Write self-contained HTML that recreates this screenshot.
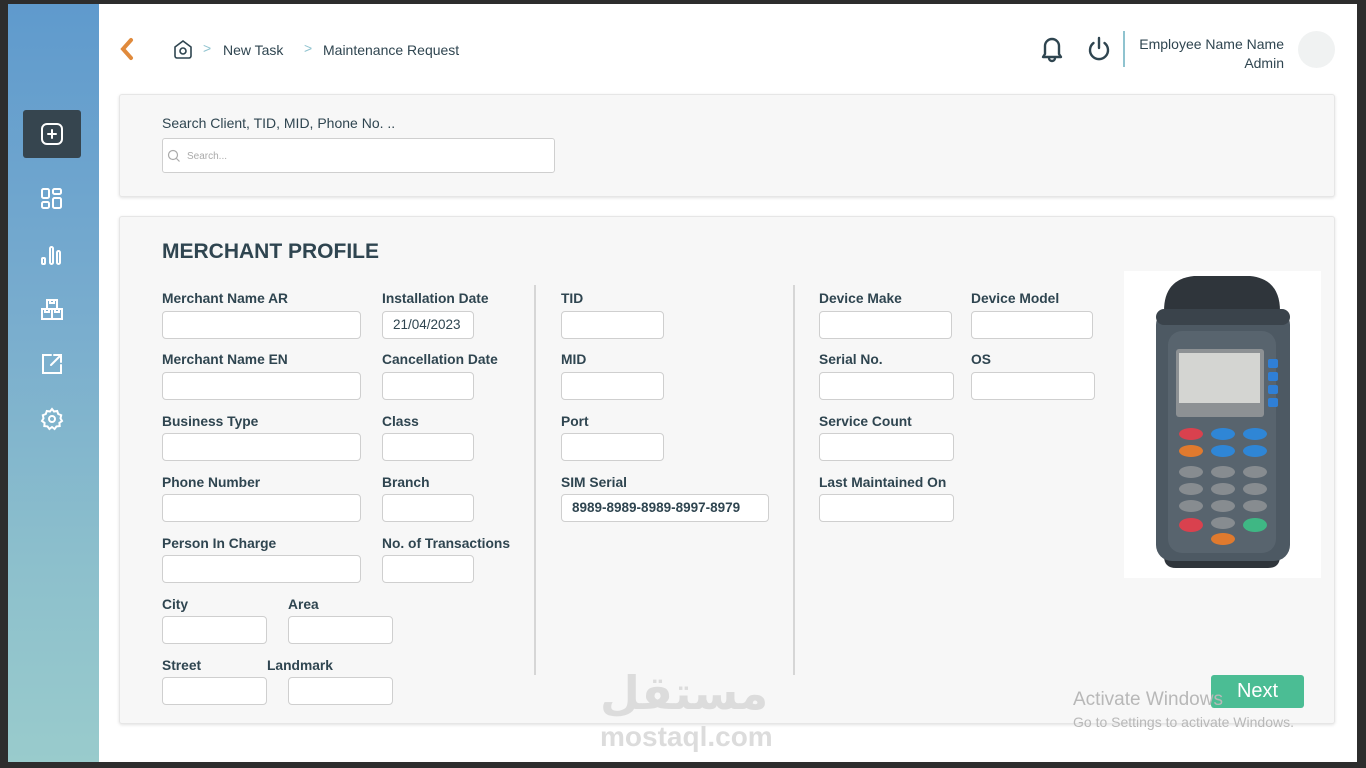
<!DOCTYPE html>
<html><head><meta charset="utf-8"><style>
*{margin:0;padding:0;box-sizing:border-box}
body{width:1366px;height:768px;background:#2d2d2d;position:relative;overflow:hidden;font-family:"Liberation Sans",sans-serif;color:#2f4550}
.abs{position:absolute}
#main{left:8px;top:4px;width:1349px;height:758px;background:#fff}
#side{left:8px;top:4px;width:91px;height:758px;background:linear-gradient(180deg,#5f9acd 0%,#78acce 40%,#8dc0cc 75%,#99cbcc 100%)}
.card{background:#f7f7f7;border:1px solid #e6e6e6;border-radius:3px;box-shadow:0 1px 3px rgba(0,0,0,.12)}
.lbl{position:absolute;font-size:13.8px;font-weight:bold;color:#2f4550;white-space:nowrap}
.inp{position:absolute;height:28px;background:#fff;border:1px solid #cfcfcf;border-radius:4px;font-size:13.5px;padding-left:10px;line-height:26px;color:#2f4550}
.ic{position:absolute}
</style></head><body>
<div id="main" class="abs"></div>
<div id="side" class="abs"></div>
<div class="abs" style="left:23px;top:110px;width:58px;height:48px;background:#36454f;border-radius:3px"></div>
<svg class="ic" style="left:40px;top:122px" width="24" height="24" viewBox="0 0 24 24" fill="none" stroke="#fff" stroke-width="2" stroke-linecap="round"><rect x="2" y="2" width="20" height="20" rx="5"/><path d="M12 8v8M8 12h8"/></svg>
<svg class="ic" style="left:40px;top:187px" width="24" height="24" viewBox="0 0 24 24" fill="none" stroke="#fff" stroke-width="2"><rect x="2" y="2" width="7" height="9" rx="1.5"/><rect x="13" y="2" width="8" height="5" rx="1.5"/><rect x="2" y="15" width="7" height="6" rx="1.5"/><rect x="13" y="11" width="8" height="10" rx="1.5"/></svg>
<svg class="ic" style="left:40px;top:243px" width="24" height="24" viewBox="0 0 24 24" fill="none" stroke="#fff" stroke-width="2"><rect x="2" y="15" width="3" height="6" rx="1"/><rect x="10" y="4" width="3" height="17" rx="1.5"/><rect x="17" y="8" width="3" height="13" rx="1.5"/></svg>
<svg class="ic" style="left:40px;top:298px" width="24" height="24" viewBox="0 0 24 24" fill="none" stroke="#fff" stroke-width="2"><rect x="7" y="2" width="10" height="9"/><rect x="2" y="11" width="10" height="10"/><rect x="12" y="11" width="10" height="10"/><path d="M10 2v3h4V2M5 11v3h4v-3M15 11v3h4v-3"/></svg>
<svg class="ic" style="left:40px;top:352px" width="24" height="24" viewBox="0 0 24 24" fill="none" stroke="#fff" stroke-width="2" stroke-linecap="round"><path d="M11 3H3v18h18v-8M14 3h7v7M21 3l-10 10"/></svg>
<svg class="ic" style="left:40px;top:407px" width="24" height="24" viewBox="0 0 24 24" fill="none" stroke="#fff" stroke-width="2"><path d="M12 2l2 2.5 3.2-.5 1 3 3 1.2-.7 3.1L22 14l-2.6 1.9.3 3.2-3.2.3L14.6 22 12 20l-2.6 2-1.9-2.6-3.2-.3.3-3.2L2 14l1.5-2.7-.7-3.1 3-1.2 1-3 3.2.5z"/><circle cx="12" cy="12" r="3"/></svg>

<svg class="ic" style="left:118px;top:37px" width="18" height="24" viewBox="0 0 18 24" fill="none" stroke="#e08a3c" stroke-width="4" stroke-linecap="round"><path d="M13 3L5 12l8 9"/></svg>
<svg class="ic" style="left:172px;top:38px" width="22" height="22" viewBox="0 0 22 22" fill="none" stroke="#2f4550" stroke-width="1.6"><path d="M3 9L11 3l8 6v9a2 2 0 0 1-2 2H5a2 2 0 0 1-2-2z"/><circle cx="11" cy="13" r="3"/></svg>
<div class="abs" style="left:203px;top:40px;font-size:14px;color:#8fc3cf">&gt;</div>
<div class="abs" style="left:223px;top:42px;font-size:14px">New Task</div>
<div class="abs" style="left:304px;top:40px;font-size:14px;color:#8fc3cf">&gt;</div>
<div class="abs" style="left:323px;top:42px;font-size:14px">Maintenance Request</div>

<svg class="ic" style="left:1040px;top:36px" width="24" height="28" viewBox="0 0 24 28" fill="none" stroke="#2f4550" stroke-width="2.4" stroke-linejoin="round"><path d="M12 3a7 7 0 0 0-7 7v8l-2 3h18l-2-3v-8a7 7 0 0 0-7-7z"/><path d="M9 22a3 3 0 0 0 6 0"/></svg>
<svg class="ic" style="left:1087px;top:36px" width="24" height="26" viewBox="0 0 24 26" fill="none" stroke="#2f4550" stroke-width="2.4" stroke-linecap="round"><path d="M12 2v10M6.5 7a9 9 0 1 0 11 0"/></svg>
<div class="abs" style="left:1123px;top:31px;width:2px;height:36px;background:#8fc3cf"></div>
<div class="abs" style="left:1100px;top:36px;width:184px;text-align:right;font-size:14px">Employee Name Name</div>
<div class="abs" style="left:1100px;top:55px;width:184px;text-align:right;font-size:14px">Admin</div>
<div class="abs" style="left:1298px;top:31px;width:37px;height:37px;border-radius:50%;background:#f0f2f2"></div>

<div class="abs card" style="left:119px;top:94px;width:1216px;height:103px"></div>
<div class="abs" style="left:162px;top:115px;font-size:14px">Search Client, TID, MID, Phone No. ..</div>
<div class="abs" style="left:162px;top:138px;width:393px;height:35px;background:#fff;border:1px solid #cfcfcf;border-radius:3px"></div>
<svg class="ic" style="left:167px;top:149px" width="14" height="14" viewBox="0 0 14 14" fill="none" stroke="#aaa" stroke-width="1.2"><circle cx="6" cy="6" r="4.5"/><path d="M9.5 9.5l3 3"/></svg>
<div class="abs" style="left:187px;top:151px;font-size:10px;color:#aaa">Search...</div>

<div class="abs card" style="left:119px;top:216px;width:1216px;height:508px"></div>
<div class="abs" style="left:162px;top:240px;font-size:21px;font-weight:bold">MERCHANT PROFILE</div>

<div class="lbl" style="left:162px;top:291px">Merchant Name AR</div><div class="inp" style="left:162px;top:311px;width:199px"></div>
<div class="lbl" style="left:382px;top:291px">Installation Date</div><div class="inp" style="left:382px;top:311px;width:92px">21/04/2023</div>
<div class="lbl" style="left:162px;top:352px">Merchant Name EN</div><div class="inp" style="left:162px;top:372px;width:199px"></div>
<div class="lbl" style="left:382px;top:352px">Cancellation Date</div><div class="inp" style="left:382px;top:372px;width:92px"></div>
<div class="lbl" style="left:162px;top:414px">Business Type</div><div class="inp" style="left:162px;top:433px;width:199px"></div>
<div class="lbl" style="left:382px;top:414px">Class</div><div class="inp" style="left:382px;top:433px;width:92px"></div>
<div class="lbl" style="left:162px;top:475px">Phone Number</div><div class="inp" style="left:162px;top:494px;width:199px"></div>
<div class="lbl" style="left:382px;top:475px">Branch</div><div class="inp" style="left:382px;top:494px;width:92px"></div>
<div class="lbl" style="left:162px;top:536px">Person In Charge</div><div class="inp" style="left:162px;top:555px;width:199px"></div>
<div class="lbl" style="left:382px;top:536px">No. of Transactions</div><div class="inp" style="left:382px;top:555px;width:92px"></div>
<div class="lbl" style="left:162px;top:597px">City</div><div class="inp" style="left:162px;top:616px;width:105px"></div>
<div class="lbl" style="left:288px;top:597px">Area</div><div class="inp" style="left:288px;top:616px;width:105px"></div>
<div class="lbl" style="left:162px;top:658px">Street</div><div class="inp" style="left:162px;top:677px;width:105px"></div>
<div class="lbl" style="left:267px;top:658px">Landmark</div><div class="inp" style="left:288px;top:677px;width:105px"></div>

<div class="abs" style="left:534px;top:285px;width:2px;height:390px;background:#d6d6d6"></div>
<div class="lbl" style="left:561px;top:291px">TID</div><div class="inp" style="left:561px;top:311px;width:103px"></div>
<div class="lbl" style="left:561px;top:352px">MID</div><div class="inp" style="left:561px;top:372px;width:103px"></div>
<div class="lbl" style="left:561px;top:414px">Port</div><div class="inp" style="left:561px;top:433px;width:103px"></div>
<div class="lbl" style="left:561px;top:475px">SIM Serial</div><div class="inp" style="left:561px;top:494px;width:208px;font-weight:bold">8989-8989-8989-8997-8979</div>

<div class="abs" style="left:793px;top:285px;width:2px;height:390px;background:#d6d6d6"></div>
<div class="lbl" style="left:819px;top:291px">Device Make</div><div class="inp" style="left:819px;top:311px;width:133px"></div>
<div class="lbl" style="left:971px;top:291px">Device Model</div><div class="inp" style="left:971px;top:311px;width:122px"></div>
<div class="lbl" style="left:819px;top:352px">Serial No.</div><div class="inp" style="left:819px;top:372px;width:135px"></div>
<div class="lbl" style="left:971px;top:352px">OS</div><div class="inp" style="left:971px;top:372px;width:124px"></div>
<div class="lbl" style="left:819px;top:414px">Service Count</div><div class="inp" style="left:819px;top:433px;width:135px"></div>
<div class="lbl" style="left:819px;top:475px">Last Maintained On</div><div class="inp" style="left:819px;top:494px;width:135px"></div>

<svg class="ic" style="left:1124px;top:271px" width="197" height="307" viewBox="0 0 197 307">
<rect width="197" height="307" fill="#fff"/>
<path d="M40 40Q40 8 70 5h56q30 3 30 35v245q0 12-12 12H52q-12 0-12-12z" fill="#2f353b"/>
<rect x="32" y="38" width="134" height="252" rx="16" fill="#4d5963"/>
<rect x="32" y="38" width="134" height="16" rx="8" fill="#3a434b"/>
<rect x="44" y="60" width="108" height="222" rx="14" fill="#58646e"/>
<rect x="52" y="78" width="88" height="68" rx="3" fill="#8d9194"/>
<rect x="55" y="82" width="81" height="50" fill="#d4d5d2"/>
<g fill="#2f7fd6"><rect x="144" y="88" width="10" height="9" rx="2"/><rect x="144" y="101" width="10" height="9" rx="2"/><rect x="144" y="114" width="10" height="9" rx="2"/><rect x="144" y="127" width="10" height="9" rx="2"/></g>
<ellipse cx="67" cy="163" rx="12" ry="6" fill="#d9414e"/><ellipse cx="99" cy="163" rx="12" ry="6" fill="#2f86d6"/><ellipse cx="131" cy="163" rx="12" ry="6" fill="#2f86d6"/>
<ellipse cx="67" cy="180" rx="12" ry="6" fill="#e07a2e"/><ellipse cx="99" cy="180" rx="12" ry="6" fill="#2f86d6"/><ellipse cx="131" cy="180" rx="12" ry="6" fill="#2f86d6"/>
<g fill="#878c90"><ellipse cx="67" cy="201" rx="12" ry="6"/><ellipse cx="99" cy="201" rx="12" ry="6"/><ellipse cx="131" cy="201" rx="12" ry="6"/>
<ellipse cx="67" cy="218" rx="12" ry="6"/><ellipse cx="99" cy="218" rx="12" ry="6"/><ellipse cx="131" cy="218" rx="12" ry="6"/>
<ellipse cx="67" cy="235" rx="12" ry="6"/><ellipse cx="99" cy="235" rx="12" ry="6"/><ellipse cx="131" cy="235" rx="12" ry="6"/><ellipse cx="99" cy="252" rx="12" ry="6"/></g>
<ellipse cx="67" cy="254" rx="12" ry="7" fill="#d9414e"/><ellipse cx="131" cy="254" rx="12" ry="7" fill="#3fb784"/><ellipse cx="99" cy="268" rx="12" ry="6" fill="#e07a2e"/>
</svg>

<div class="abs" style="left:1211px;top:675px;width:93px;height:33px;background:#4bbd94;border-radius:3px;color:#fff;font-size:20px;text-align:center;line-height:33px">Next</div>
<div class="abs" style="left:1073px;top:689px;font-size:19px;color:#b8b8b8">Activate Windows</div>
<div class="abs" style="left:1073px;top:714px;font-size:14px;color:#b8b8b8">Go to Settings to activate Windows.</div>
<div class="abs" style="left:600px;top:662px;width:166px;text-align:center;font-size:46px;font-weight:bold;color:#dcdcdc;font-family:'Noto Sans CJK SC','DejaVu Sans',sans-serif;line-height:56px">مستقل</div>
<div class="abs" style="left:600px;top:721px;width:166px;text-align:center;font-size:28px;font-weight:bold;color:#dcdcdc">mostaql.com</div>
</body></html>
